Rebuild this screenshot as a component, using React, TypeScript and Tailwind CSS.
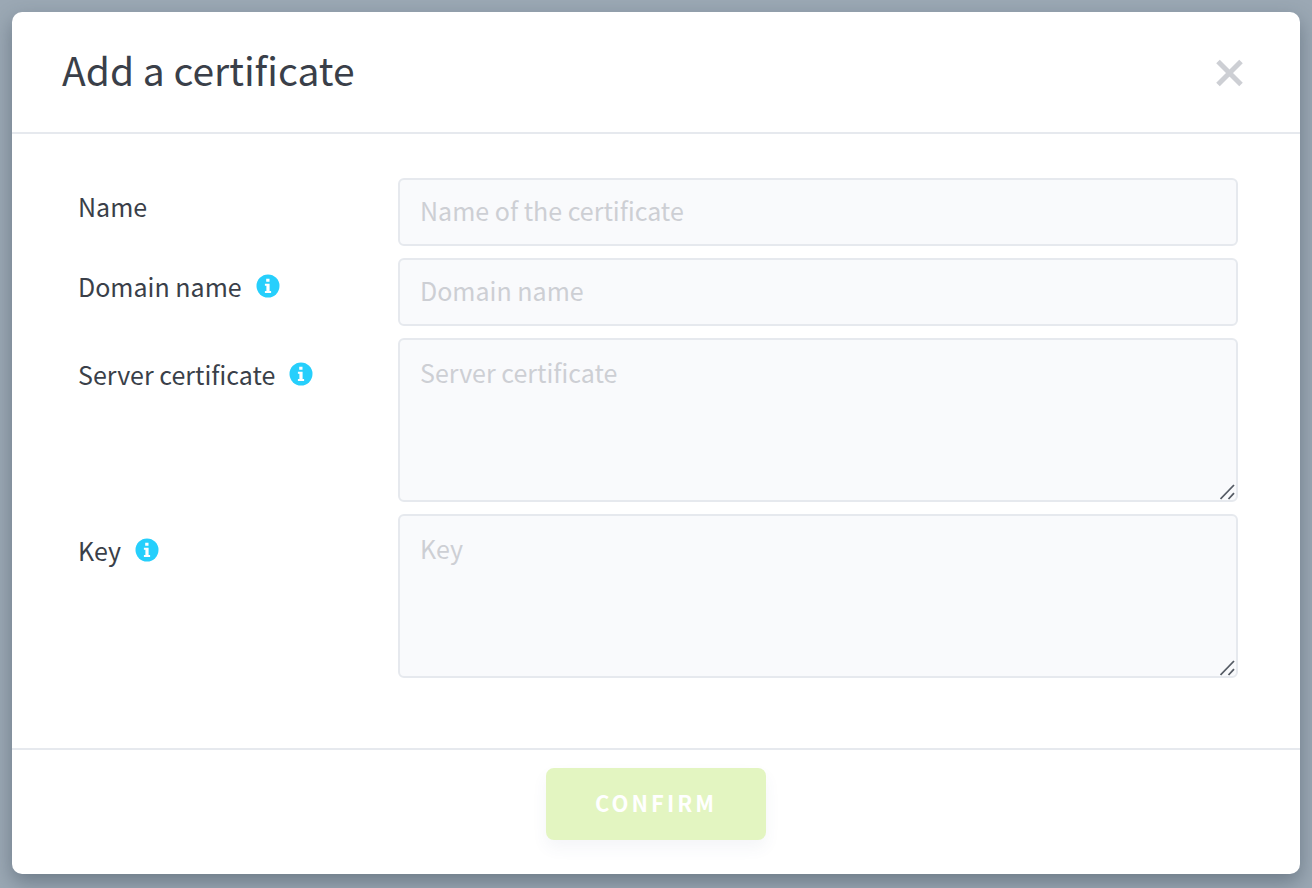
import { useState } from "react"

type Field = {
  id: string
  label: string
  placeholder: string
  info?: boolean
  multiline?: boolean
}

const fields: Field[] = [
  { id: "name", label: "Name", placeholder: "Name of the certificate" },
  { id: "domain", label: "Domain name", placeholder: "Domain name", info: true },
  { id: "certificate", label: "Server certificate", placeholder: "Server certificate", info: true, multiline: true },
  { id: "key", label: "Key", placeholder: "Key", info: true, multiline: true },
]

const inputStyle =
  "block w-full rounded-md border-2 border-[#e6e9ee] bg-[#f9fafc] px-5 text-[25px] leading-9 text-[#3a3f49] placeholder:text-[#cdcfd4] outline-none focus:border-[#26cffc]"

function InfoIcon() {
  return (
    <svg viewBox="0 0 24 24" className="size-6 shrink-0" aria-hidden="true">
      <circle cx="12" cy="12" r="11.5" fill="#26cffc" />
      <path
        d="M10.2 4.7h3.3v3h-3.3zM8.9 9.7h4.7v7.2h1.5v2H8.9v-2h1.5v-5.2H8.9z"
        fill="#fff"
      />
    </svg>
  )
}

function ResizeHandle() {
  return (
    <svg
      viewBox="0 0 16 16"
      className="pointer-events-none absolute right-0.5 bottom-0.5 size-4"
      stroke="#555b64"
      strokeWidth="1.8"
      aria-hidden="true"
    >
      <path d="M.5 15L14 1M8.5 15L14 9.2" />
    </svg>
  )
}

function FieldRow({ field }: { field: Field }) {
  return (
    <div className="flex items-start">
      <label
        htmlFor={field.id}
        className={`flex w-80 shrink-0 items-center gap-3.5 text-[25px] leading-9 text-[#3a3f49] ${field.multiline ? "pt-4.5" : "pt-2.5"}`}
      >
        {field.label}
        {field.info && <InfoIcon />}
      </label>
      <div className="relative min-w-0 flex-1">
        {field.multiline ? (
          <>
            <textarea
              id={field.id}
              placeholder={field.placeholder}
              className={`${inputStyle} h-41 resize-none py-3.5`}
            />
            <ResizeHandle />
          </>
        ) : (
          <input id={field.id} type="text" placeholder={field.placeholder} className={`${inputStyle} h-17 pb-1`} />
        )}
      </div>
    </div>
  )
}

export default function App() {
  const [open, setOpen] = useState(true)

  return (
    <div className="min-h-screen bg-[#9ba8b4] px-3 pt-3 pb-3.5 font-['Noto_Sans_CJK_SC',sans-serif]">
      {open && (
        <div
          role="dialog"
          aria-labelledby="title"
          className="rounded-[10px] bg-white shadow-[0_8px_20px_rgba(40,55,70,0.4)]"
        >
          <div className="flex items-start justify-between border-b-2 border-[#e6e9ee] py-8 pr-14 pl-12.5">
            <h1 id="title" className="text-[39px] leading-[50px] text-[#3a3f49]">
              Add a certificate
            </h1>
            <button
              type="button"
              aria-label="Close"
              onClick={() => setOpen(false)}
              className="flex size-14 items-center justify-end"
            >
              <svg viewBox="0 0 30 30" className="size-7.5" stroke="#cdcfd4" strokeWidth="5">
                <path d="M4 4.5l23 23M27 4.5l-23 23" />
              </svg>
            </button>
          </div>

          <form onSubmit={(e) => e.preventDefault()}>
            <div className="flex flex-col gap-3 pt-11 pr-15.5 pb-17.5 pl-16.5">
              {fields.map((field) => (
                <FieldRow key={field.id} field={field} />
              ))}
            </div>
            <div className="flex justify-center border-t-2 border-[#e6e9ee] pt-4.5 pb-8.5">
              <button
                type="submit"
                className="h-18 w-55 rounded-lg bg-[#e3f5c1] pb-1 text-[22px] font-bold tracking-[3px] text-white shadow-[0_8px_16px_rgba(60,80,140,0.06)]"
              >
                CONFIRM
              </button>
            </div>
          </form>
        </div>
      )}
    </div>
  )
}
